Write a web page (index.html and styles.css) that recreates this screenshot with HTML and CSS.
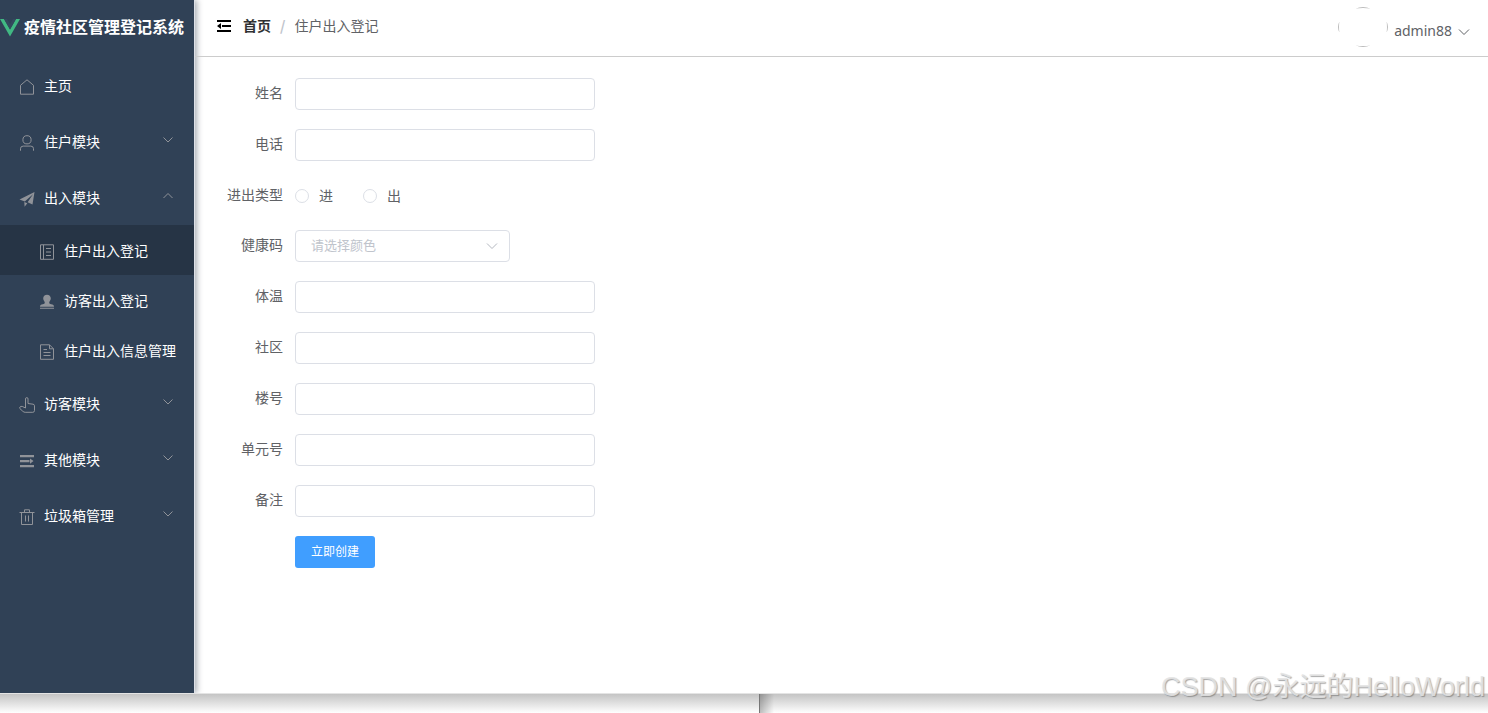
FILE: index.html
```html
<!DOCTYPE html>
<html lang="zh-CN">
<head>
<meta charset="utf-8">
<title>疫情社区管理登记系统</title>
<link rel="stylesheet" href="styles.css">
</head>
<body>
<div class="app">
  <aside class="sidebar">
    <div class="brand">
      <svg class="brand-logo" viewBox="0 0 20 18" aria-hidden="true"><path d="M0 0h4l6 10.500L16 0h4L10 17.500z" fill="#41b883"/><path d="M4 0h3l3 5 3-5h3l-6 10.500z" fill="#34495e"/></svg>
      <span>疫情社区管理登记系统</span>
    </div>
    <nav class="menu">
      <a class="item" href="#">
        <svg class="icon" viewBox="0 0 16 16"><path d="M1.500 15.200V6.300L8 .8l6.500 5.500v8.900z"/></svg>
        <span>主页</span>
      </a>
      <button class="item" type="button">
        <svg class="icon" viewBox="0 0 16 16"><circle cx="8" cy="4.800" r="4.100"/><path d="M1.500 15.700v-2q0-2.600 2.700-2.600h7.600q2.700 0 2.700 2.600v2"/></svg>
        <span>住户模块</span>
        <svg class="chevron" viewBox="0 0 12 8"><path d="M1.500 1.500 6 6l4.500-4.500"/></svg>
      </button>
      <button class="item" type="button" aria-expanded="true">
        <svg class="icon solid" viewBox="0 0 16 16"><path d="M.5 8.500 15.500 1 13.500 13.500 8.600 11.300 14 3.300 5.800 10.500zM5.300 11l3 1.200-2.700 3.500z"/></svg>
        <span>出入模块</span>
        <svg class="chevron" viewBox="0 0 12 8"><path d="M1.500 6 6 1.500 10.500 6"/></svg>
      </button>
      <div class="submenu">
        <a class="item active" href="#" aria-current="page">
          <svg class="icon" viewBox="0 0 16 16"><path d="M1.500.8h13v14.500h-13zM4.500.8v14.500M7 4.500h5M7 8h5M7 11.500h5"/></svg>
          <span>住户出入登记</span>
        </a>
        <a class="item" href="#">
          <svg class="icon solid" viewBox="0 0 16 16"><path d="M8 .8c2.300 0 3.800 1.600 3.800 3.600 0 1.800-1.600 2.700-1.600 4.300 0 .9.800 1.300 2 1.500 1.900.3 2.800 1 2.800 2.600H1c0-1.600.9-2.300 2.800-2.600 1.200-.2 2-.6 2-1.500 0-1.600-1.600-2.500-1.600-4.300C4.200 2.400 5.700.8 8 .8zM1 13.800h14v1H1z"/></svg>
          <span>访客出入登记</span>
        </a>
        <a class="item" href="#">
          <svg class="icon" viewBox="0 0 16 16"><path d="M1.500.8h9l4 4v10.500h-13zM10.500.8v4h4M4.500 5.500H8M4.500 8.500h7M4.500 11.500h7"/></svg>
          <span>住户出入信息管理</span>
        </a>
      </div>
      <button class="item" type="button">
        <svg class="icon" viewBox="0 0 16 16"><path d="M6.500 11V2q0-1.400 1.300-1.400T9 2v4.500l5 .7q1.500.2 1.500 1.600v4.700q0 1.800-1.700 1.800H6.200q-1.300 0-2.400-1L.9 11.600Q.2 10.700 1 10q.9-.8 2.200-.6z"/></svg>
        <span>访客模块</span>
        <svg class="chevron" viewBox="0 0 12 8"><path d="M1.500 1.500 6 6l4.500-4.500"/></svg>
      </button>
      <button class="item" type="button">
        <svg class="icon solid" viewBox="0 0 16 16"><path d="M1 2h14v2.300H1zM1 7h9.500v2.300H1zM1 12h14v2.300H1zM11 5.500 14.500 8.100 11 10.700z"/></svg>
        <span>其他模块</span>
        <svg class="chevron" viewBox="0 0 12 8"><path d="M1.500 1.500 6 6l4.500-4.500"/></svg>
      </button>
      <button class="item" type="button">
        <svg class="icon" viewBox="0 0 16 16"><path d="M.5 3.500h15M2.500 3.500v12h11v-12M5.500 3.300V.8h5v2.500M6.500 6.500v6M9.500 6.500v6"/></svg>
        <span>垃圾箱管理</span>
        <svg class="chevron" viewBox="0 0 12 8"><path d="M1.500 1.500 6 6l4.500-4.500"/></svg>
      </button>
    </nav>
  </aside>

  <div class="page">
    <header class="topbar">
      <button class="fold" type="button" aria-label="折叠菜单">
        <svg viewBox="0 0 14 12"><path d="M0 0h14v2H0zM5 5h9v2H5zM0 10h14v2H0zM0 6l4-3v6z"/></svg>
      </button>
      <nav class="crumbs">
        <a href="#">首页</a>
        <span class="slash">/</span>
        <span>住户出入登记</span>
      </nav>
      <button class="user" type="button">
        <svg class="avatar" viewBox="0 0 50 40" aria-hidden="true"><path d="M17.500 1.200Q25-.2 32.500 1.200 25 .8 17.500 1.200zM17.500 38.800q7.500 1.400 15 0-7.500.4-15 0zM1.200 14.500q-1.400 5.500 0 11-.4-5.500 0-11zM48.800 14.500q1.400 5.500 0 11 .4-5.500 0-11z"/></svg>
        <span class="name">admin88</span>
        <svg class="caret" viewBox="0 0 12 8"><path d="M1 1.500 6 6.500l5-5"/></svg>
      </button>
    </header>

    <main>
      <form class="form">
        <div class="row"><label for="name">姓名</label><input class="field" id="name" type="text"></div>
        <div class="row"><label for="phone">电话</label><input class="field" id="phone" type="text"></div>
        <div class="row choices" role="radiogroup" aria-labelledby="kind">
          <span class="label" id="kind">进出类型</span>
          <label class="choice"><input type="radio" name="kind">进</label>
          <label class="choice"><input type="radio" name="kind">出</label>
        </div>
        <div class="row">
          <label for="code">健康码</label>
          <div class="picker">
            <select id="code"><option>请选择颜色</option></select>
            <svg class="caret" viewBox="0 0 12 8"><path d="M1 1.500 6 6.500l5-5"/></svg>
          </div>
        </div>
        <div class="row"><label for="temp">体温</label><input class="field" id="temp" type="text"></div>
        <div class="row"><label for="area">社区</label><input class="field" id="area" type="text"></div>
        <div class="row"><label for="building">楼号</label><input class="field" id="building" type="text"></div>
        <div class="row"><label for="unit">单元号</label><input class="field" id="unit" type="text"></div>
        <div class="row"><label for="note">备注</label><input class="field" id="note" type="text"></div>
        <div class="actions"><button class="submit" type="button">立即创建</button></div>
      </form>
    </main>
  </div>
</div>
<footer class="edge"><div class="edge-left"></div><div class="edge-right"></div></footer>
<div class="watermark">CSDN @永远的HelloWorld</div>
</body>
</html>
```

FILE: styles.css
```css
* { box-sizing: border-box; }

body {
  margin: 0;
  min-height: 100vh;
  display: flex;
  flex-direction: column;
  position: relative;
  background: #fff;
  color: #606266;
  font: 14px/20px "Noto Sans", "Noto Sans CJK SC", sans-serif;
}

button, input, select { font: inherit; color: inherit; }
button { border: 0; padding: 0; background: none; cursor: pointer; }
a { color: inherit; text-decoration: none; }

.app { flex: 1; display: flex; }

.sidebar {
  flex: 0 0 195px;
  background: #304156;
  color: #fff;
  border-right: 1px solid #dcdfe6;
  box-shadow: 2px 0 6px rgba(0, 21, 41, .35);
  font-family: "Noto Sans CJK SC", sans-serif;
}

.brand {
  height: 57px;
  padding-bottom: 5px;
  display: flex;
  align-items: center;
  gap: 4px;
  font-size: 16px;
  font-weight: 700;
  white-space: nowrap;
}
.brand-logo { width: 20px; height: 18px; margin-top: 3px; }

.item {
  width: 100%;
  height: 56px;
  padding: 0 20px 0 19px;
  display: flex;
  align-items: center;
  gap: 9px;
  text-align: left;
  white-space: nowrap;
}
.submenu .item { height: 50px; padding: 0 0 0 39px; }
.submenu .active { background: #263445; }

.icon {
  flex: none;
  width: 16px;
  height: 16px;
  margin-top: 3px;
  fill: none;
  stroke: #909399;
  stroke-width: 1;
}
.icon.solid { fill: #909399; stroke: none; }

.chevron {
  width: 12px;
  height: 8px;
  margin: 0 0 2px auto;
  fill: none;
  stroke: #909399;
  stroke-width: 1;
}

.page { flex: 1; min-width: 0; }

.topbar {
  height: 57px;
  padding: 0 18px 0 22px;
  display: flex;
  align-items: center;
  border-bottom: 1px solid #ccc;
}
.fold { margin-bottom: 4px; }
.fold svg { display: block; width: 14px; height: 12px; fill: #000; }

.crumbs {
  display: flex;
  gap: 9px;
  margin: 0 auto 6px 12px;
  font-family: "Noto Sans CJK SC", sans-serif;
}
.crumbs a { color: #303133; font-weight: 700; }
.slash { color: #c0c4cc; font-weight: 700; }

.user { display: flex; align-items: center; gap: 6px; }
.avatar { width: 50px; height: 40px; margin-bottom: 2px; fill: #777; }
.name { padding-top: 6px; }
.caret { width: 12px; height: 8px; fill: none; stroke: #606266; stroke-width: 1; }
.user .caret { margin-top: 8px; }

main { padding: 21px 20px; font-family: "Noto Sans CJK SC", sans-serif; }

.form { display: flex; flex-direction: column; gap: 18px; }
.row { display: flex; height: 33px; }
.row.choices { height: 32px; }
.row > label, .label {
  flex: 0 0 80px;
  padding-right: 12px;
  text-align: right;
  line-height: 28px;
}

.field, .picker select {
  height: 32px;
  border: 1px solid #dcdfe6;
  border-radius: 4px;
  background: #fff;
  padding: 0 15px;
  outline: 0;
}
.field { width: 300px; }

.row > .choice {
  flex: none;
  display: flex;
  align-items: center;
  gap: 10px;
  padding: 0 0 3px;
  margin-right: 30px;
}
.choice input {
  appearance: none;
  width: 14px;
  height: 14px;
  margin: 2px 0 0;
  border: 1px solid #dcdfe6;
  border-radius: 50%;
}
.choice input:checked { border: 4px solid #409eff; }

.picker { position: relative; width: 215px; }
.picker select {
  appearance: none;
  width: 100%;
  padding-bottom: 3px;
  color: #c0c4cc;
  font-size: 13px;
}
.picker .caret {
  position: absolute;
  right: 12px;
  top: 12px;
  stroke: #b4b8c0;
  pointer-events: none;
}

.actions { padding-left: 80px; }
.submit {
  display: block;
  height: 32px;
  padding: 0 16px 2px;
  border-radius: 3px;
  background: #409eff;
  color: #fff;
  font-size: 12px;
}

.edge {
  height: 20px;
  display: flex;
  border-top: 1px solid #e4e4e4;
}
.edge-left, .edge-right { background: linear-gradient(#c4c4c4, #fff); }
.edge-left { width: 51%; }
.edge-right {
  flex: 1;
  border-left: 1px solid #777;
  background: linear-gradient(90deg, rgba(0, 0, 0, .25), transparent 14px), linear-gradient(#c4c4c4, #fff);
}

.watermark {
  position: absolute;
  right: 3px;
  bottom: 6px;
  color: rgba(228, 228, 228, .9);
  font: 27px/40px "Liberation Sans", "Noto Sans CJK SC", sans-serif;
  text-shadow: 1px 1px 1px rgba(110, 110, 110, .6);
  white-space: nowrap;
  pointer-events: none;
}
```
